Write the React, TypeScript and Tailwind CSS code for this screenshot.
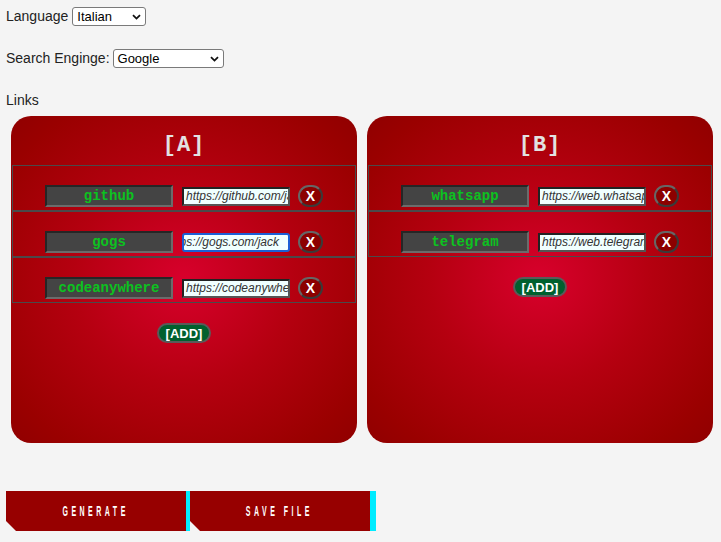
import React from "react";

type Link = { name: string; url: string; focused?: boolean };

const panels: { title: string; links: Link[] }[] = [
  {
    title: "[A]",
    links: [
      { name: "github", url: "https://github.com/jackwright" },
      { name: "gogs", url: "https://gogs.com/jack", focused: true },
      { name: "codeanywhere", url: "https://codeanywhere.com" },
    ],
  },
  {
    title: "[B]",
    links: [
      { name: "whatsapp", url: "https://web.whatsapp.com" },
      { name: "telegram", url: "https://web.telegram.org" },
    ],
  },
];

function Chevron() {
  return (
    <svg
      className="pointer-events-none absolute right-[5px] top-1/2 -translate-y-1/2"
      width="9"
      height="6"
      viewBox="0 0 9 6"
    >
      <path d="M1 1.2 L4.5 4.6 L8 1.2" fill="none" stroke="#111" strokeWidth="1.8" />
    </svg>
  );
}

function Select({ value, width }: { value: string; width: string }) {
  return (
    <div className={`relative h-[19px] ${width}`}>
      <div className="flex h-full w-full items-center rounded-[3px] border border-[#7a7a7a] bg-white pl-[4px] text-[13px] leading-none text-black">
        {value}
      </div>
      <Chevron />
    </div>
  );
}

function Row({ link }: { link: Link }) {
  return (
    <div className="flex items-center justify-center border border-[#4a4a4a] pt-[19px] pb-[3px] h-[46px]">
      <div className="flex h-[22px] w-[128px] items-center justify-center border-2 border-t-[#262626] border-l-[#262626] border-b-[#6b6b6b] border-r-[#6b6b6b] bg-[#444444] pt-px font-['Liberation_Mono',monospace] text-[14px] font-bold text-[#0cc21f]">
        {link.name}
      </div>
      {link.focused ? (
        <div className="ml-[9px] flex h-[19px] w-[108px] items-center justify-end overflow-hidden whitespace-nowrap rounded-[3px] border-2 border-[#1a5fd6] bg-[#f0ffff] pr-[3px] font-['Liberation_Sans',Arial,sans-serif] text-[12px] italic text-[#333]">
          <span>{link.url}</span>
          <span className="ml-[6px] inline-block h-[13px] w-px bg-black" />
        </div>
      ) : (
        <div className="ml-[9px] flex h-[19px] w-[108px] items-center overflow-hidden whitespace-nowrap border-2 border-t-[#222] border-l-[#222] border-b-[#555] border-r-[#555] bg-[#f0ffff] pl-[2px] font-['Liberation_Sans',Arial,sans-serif] text-[12px] italic text-[#333]">
          {link.url}
        </div>
      )}
      <button className="ml-[8px] flex h-[22px] w-[25px] items-center justify-center rounded-full border-2 border-t-[#666] border-l-[#666] border-b-[#3a3a3a] border-r-[#3a3a3a] bg-[#8c0000] font-['Liberation_Sans',Arial,sans-serif] text-[14px] font-bold leading-none text-white">
        X
      </button>
    </div>
  );
}

function Panel({ title, links }: { title: string; links: Link[] }) {
  return (
    <div className="flex h-[327px] w-[346px] flex-col rounded-[20px] bg-[radial-gradient(ellipse_at_center,#d8002c_0%,#b50010_45%,#9a0000_85%,#900000_100%)] px-px">
      <div className="flex h-[49px] items-center justify-center pt-[9px] font-['Liberation_Mono',monospace] text-[22px] font-bold tracking-[1px] text-[#e2e2e2]">
        {title}
      </div>
      <div className="flex flex-col">
        {links.map((l) => (
          <Row key={l.name} link={l} />
        ))}
      </div>
      <div className="mt-[20px] flex justify-center">
        <button className="flex h-[20px] w-[54px] items-center justify-center rounded-full border-2 border-[#5a5a5a] bg-[#00602e] font-['Liberation_Sans',Arial,sans-serif] text-[13px] font-bold leading-none text-white">
          [ADD]
        </button>
      </div>
    </div>
  );
}

function ActionButton({ label, wide }: { label: string; wide?: boolean }) {
  return (
    <button
      className={
        wide
          ? "flex h-[40px] w-[186px] items-center justify-center overflow-hidden border-r-[6px] border-[#00ecff] bg-[#970000] pr-[4px] font-['Liberation_Sans',Arial,sans-serif] text-[14px] font-bold text-white [clip-path:polygon(0_0,100%_0,100%_100%,10px_100%,0_calc(100%-10px))]"
          : "flex h-[40px] w-[184px] items-center justify-center overflow-hidden border-r-4 border-[#00ecff] bg-[#970000] pr-[4px] font-['Liberation_Sans',Arial,sans-serif] text-[14px] font-bold text-white [clip-path:polygon(0_0,100%_0,100%_100%,10px_100%,0_calc(100%-10px))]"
      }
    >
      <span className="inline-block scale-x-50 whitespace-nowrap tracking-[7px] pl-[7px]">{label}</span>
    </button>
  );
}

export default function App() {
  return (
    <div className="min-h-[542px] w-[721px] bg-[#f4f4f4] font-['Liberation_Sans',Arial,sans-serif] text-[14px] text-[#222]">
      <div className="px-[6px] pt-[7px]">
        <div className="flex h-[19px] items-center">
          <span className="mr-[4px]">Language</span>
          <Select value="Italian" width="w-[74px]" />
        </div>
        <div className="mt-[23px] flex h-[19px] items-center">
          <span className="mr-[3px]">Search Enginge:</span>
          <Select value="Google" width="w-[111px]" />
        </div>
        <div className="mt-[24px] leading-[16px]">Links</div>
      </div>
      <div className="mt-[8px] flex gap-[10px] pl-[11px]">
        {panels.map((p) => (
          <Panel key={p.title} title={p.title} links={p.links} />
        ))}
      </div>
      <div className="mt-[48px] flex pl-[6px]">
        <ActionButton label="GENERATE" />
        <ActionButton label="SAVE FILE" wide />
      </div>
    </div>
  );
}
